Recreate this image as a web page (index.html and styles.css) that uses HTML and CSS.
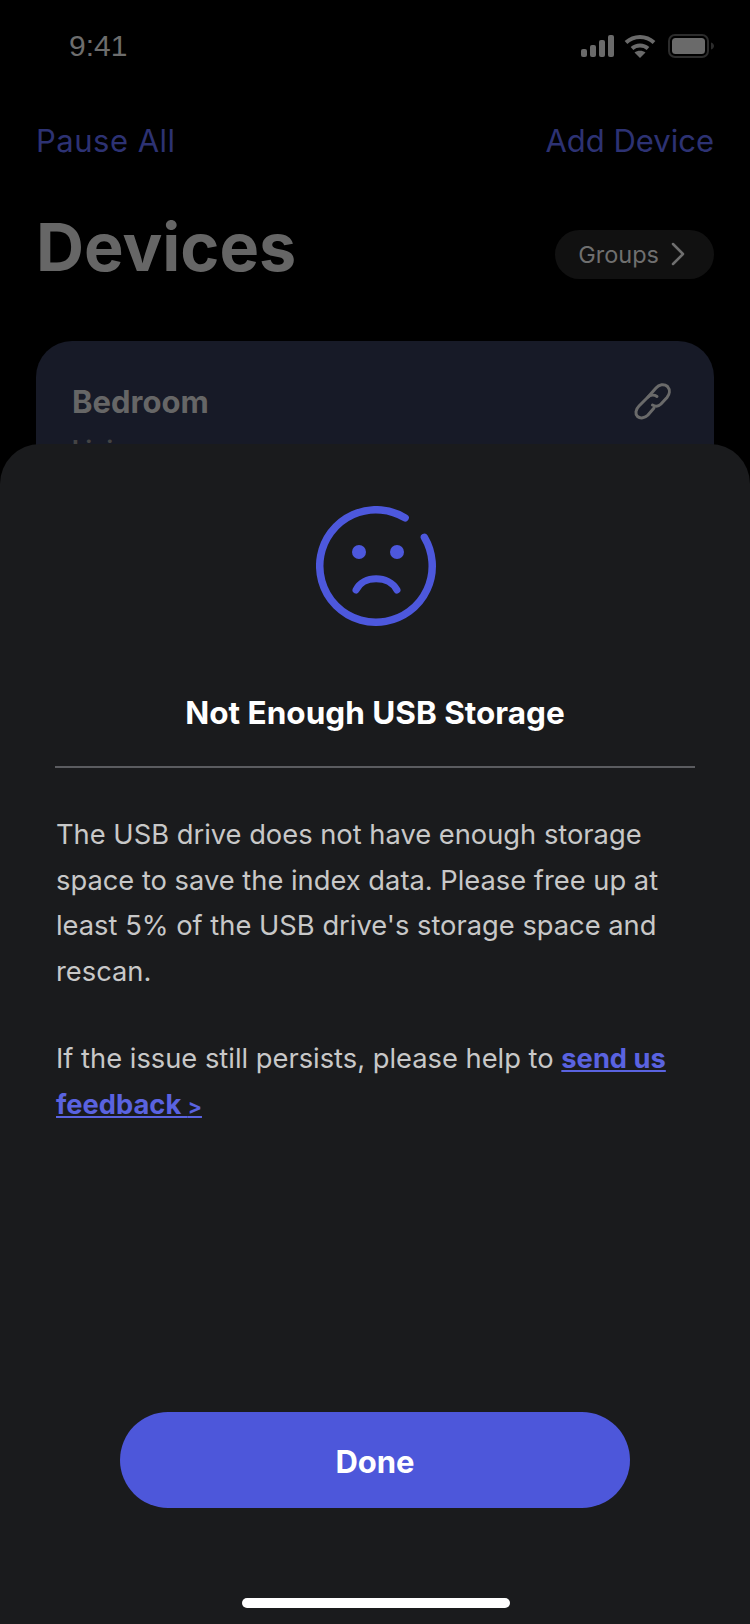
FILE: index.html
```html
<!DOCTYPE html>
<html lang="en">
<head>
    <meta charset="UTF-8">
    <meta name="viewport" content="width=device-width, initial-scale=1.0">
    <title>Devices</title>
    <link rel="stylesheet" href="styles.css">
</head>
<body>
    <div class="screen">
        <div class="status-bar">
            <span class="time">9:41</span>
            <div class="status-icons">
                <svg width="36" height="22" viewBox="0 0 36 22"><g fill="#6a6a6a"><rect x="1" y="14" width="6" height="8" rx="2"/><rect x="10" y="10" width="6" height="12" rx="2"/><rect x="19" y="5" width="6" height="17" rx="2"/><rect x="28" y="0" width="6" height="22" rx="2"/></g></svg>
                <svg class="wifi" width="32" height="24" viewBox="0 0 32 24"><g fill="none" stroke="#6a6a6a" stroke-width="4"><path d="M2 8.500C10 1 22 1 30 8.500"/><path d="M8 14.500C12.500 10.500 19.500 10.500 24 14.500"/></g><path d="M16 24l-5.500-5.500C13.500 16 18.500 16 21.500 18.500z" fill="#6a6a6a"/></svg>
                <svg width="46" height="24" viewBox="0 0 46 24"><rect x="1" y="1" width="39" height="22" rx="6" fill="none" stroke="#2c2c2c" stroke-width="2"/><rect x="4" y="4" width="33" height="16" rx="3.500" fill="#6a6a6a"/><path d="M43 8.500c2 .6 3 2 3 3.500s-1 2.900-3 3.500z" fill="#2c2c2c"/></svg>
            </div>
        </div>

        <div class="top-links">
            <span class="pause-all">Pause All</span>
            <span>Add Device</span>
        </div>

        <div class="title-row">
            <h1>Devices</h1>
            <div class="groups-btn">
                <span>Groups</span>
                <svg width="14" height="24" viewBox="0 0 14 24"><path d="M2 2l10 10L2 22" fill="none" stroke="#6f6f6f" stroke-width="2.500" stroke-linecap="round" stroke-linejoin="round"/></svg>
            </div>
        </div>

        <div class="device-card">
            <div class="device-head">
                <span class="device-name">Bedroom</span>
                <svg width="38" height="38" viewBox="0 0 38 38"><g fill="none" stroke="#6a6a6a" stroke-width="3" stroke-linecap="round"><path d="M14 15L22 6C25 2.500 30 1.500 33.500 4.500C36.500 8 35.500 12.500 33 15.500L27 22C24.500 24.500 21 24.500 18.500 23"/><path d="M23 14.500C20 12.500 16 13 13.500 15.500L5 24C1.500 27.500 1 32 3.500 34.500C6.500 37 11 36 14 33L20 26"/></g></svg>
            </div>
            <div class="device-sub">Living</div>
        </div>

        <div class="sheet">
            <svg class="sad-icon" width="120" height="120" viewBox="0 0 120 120">
                <g fill="none" stroke="#4d58dd" stroke-linecap="round">
                    <path d="M89.090 11.850A56.250 56.250 0 1 0 108.400 31.350" stroke-width="7.500"/>
                    <path d="M40 84C47 69 73 69 81 84" stroke-width="7"/>
                </g>
                <circle cx="43" cy="46" r="7" fill="#4d58dd"/>
                <circle cx="81" cy="46" r="7" fill="#4d58dd"/>
            </svg>

            <h2>Not Enough USB Storage</h2>
            <div class="divider"></div>

            <p>The USB drive does not have enough storage space to save the index data. Please free up at least 5% of the USB drive's storage space and rescan.</p>
            <p>If the issue still persists, please help to <a href="#">send us feedback <span class="link-arrow">&gt;</span></a></p>

            <button type="button" class="done-btn">Done</button>
            <div class="home-bar"></div>
        </div>
    </div>
</body>
</html>
```

FILE: styles.css
```css
* {
    margin: 0;
    padding: 0;
    box-sizing: border-box;
    font-family: Inter, "Noto Sans", sans-serif;
}

body {
    background: #000;
}

.screen {
    position: relative;
    width: 750px;
    height: 1624px;
    overflow: hidden;
    background: #000;
    padding: 0 36px;
}

.status-bar {
    display: flex;
    justify-content: space-between;
    align-items: center;
    height: 92px;
    padding: 0 0 0 33px;
}

.time {
    font-family: "Liberation Sans", sans-serif;
    font-size: 30px;
    color: #6d6d6d;
}

.status-icons {
    display: flex;
    align-items: center;
    gap: 10px;
}

.wifi {
    margin: 0 2px 0 -2px;
}

.top-links {
    display: flex;
    justify-content: space-between;
    align-items: center;
    height: 50px;
    margin-top: 23px;
    font-size: 31px;
    color: #2d3273;
}

.pause-all {
    letter-spacing: 0.500px;
}

.title-row {
    display: flex;
    justify-content: space-between;
    align-items: center;
    margin-top: 48px;
    height: 82px;
}

.title-row h1 {
    margin-bottom: 14px;
    font-size: 66.500px;
    font-weight: 700;
    color: #666;
}

.groups-btn {
    display: flex;
    align-items: center;
    gap: 12px;
    height: 49px;
    padding: 0 29px 0 23px;
    border-radius: 25px;
    background: #111;
    font-size: 23.500px;
    color: #6f6f6f;
}

.device-card {
    margin-top: 46px;
    height: 200px;
    padding: 41px 42px 0 36px;
    border-radius: 36px;
    background: #171a27;
}

.device-head {
    display: flex;
    justify-content: space-between;
    align-items: flex-start;
}

.device-name {
    margin-top: 1px;
    font-size: 31px;
    font-weight: 700;
    color: #666;
}

.device-sub {
    margin-top: 15px;
    font-size: 24px;
    font-weight: 700;
    color: #444;
}

.sheet {
    position: absolute;
    left: 0;
    right: 0;
    bottom: 0;
    height: 1180px;
    display: flex;
    flex-direction: column;
    align-items: center;
    padding: 62px 55px 16px;
    border-radius: 40px 40px 0 0;
    background: #1a1b1d;
}

.sad-icon {
    flex: none;
    margin-left: 2px;
}

.sheet h2 {
    margin-top: 67px;
    font-size: 31.500px;
    font-weight: 700;
    line-height: 40px;
    color: #fff;
}

.divider {
    align-self: stretch;
    flex: none;
    height: 2px;
    margin-top: 33px;
    background: #5b5c60;
}

.sheet p {
    align-self: stretch;
    padding-left: 1px;
    font-size: 27.300px;
    line-height: 45.600px;
    color: #c8c8c8;
}

.divider + p {
    margin-top: 44px;
}

.sheet p + p {
    margin-top: 42px;
}

.sheet a {
    font-weight: 700;
    color: #5a63e0;
}

.link-arrow {
    font-size: 21px;
}

.done-btn {
    width: 510px;
    height: 96px;
    margin-top: auto;
    padding-top: 3px;
    border: none;
    border-radius: 48px;
    background: #4d57da;
    font-size: 31px;
    font-weight: 700;
    color: #fff;
}

.home-bar {
    flex: none;
    width: 268px;
    height: 10px;
    margin-top: 90px;
    margin-left: 2px;
    border-radius: 5px;
    background: #fff;
}
```
